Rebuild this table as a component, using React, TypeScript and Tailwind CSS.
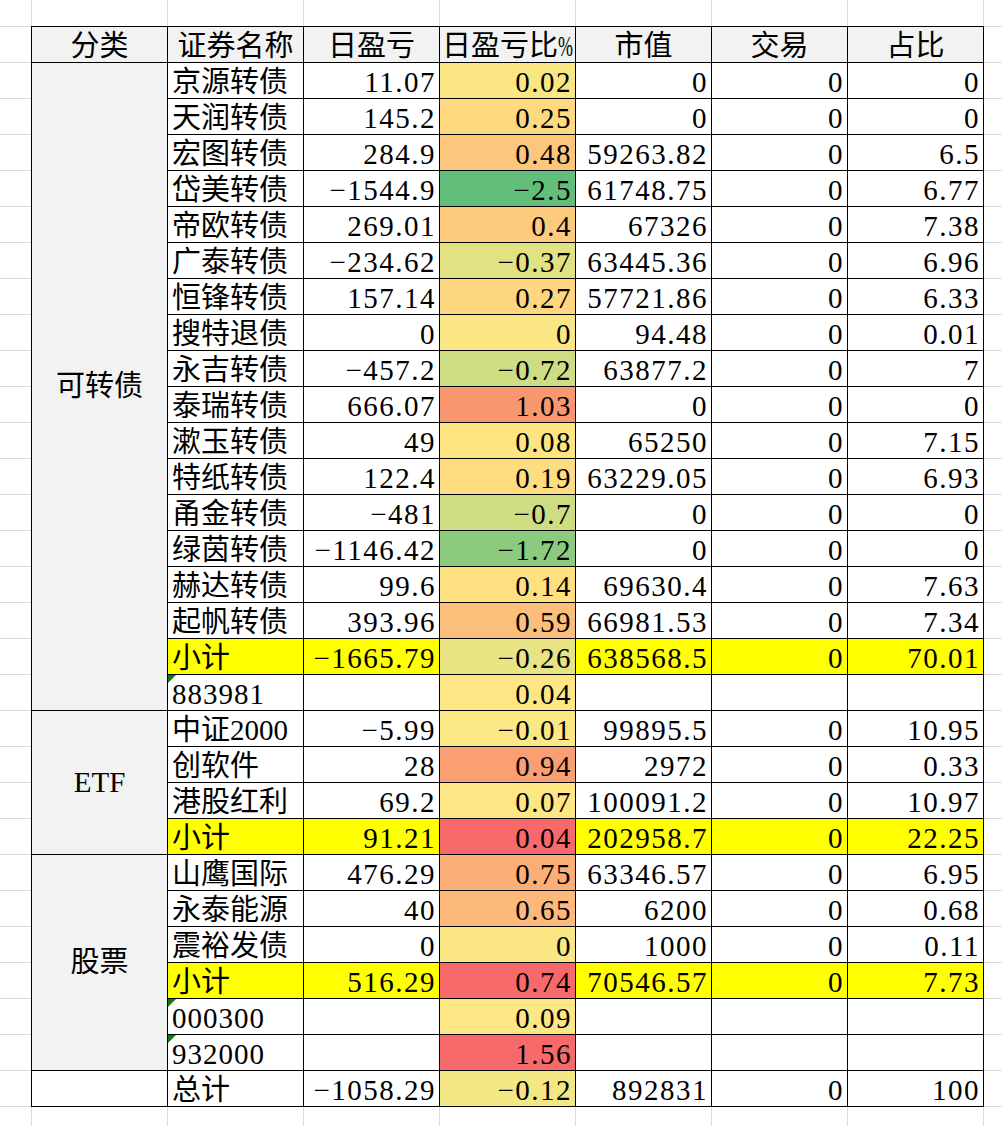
import React from "react";

type Row = {
  name: string;
  pnl?: string;
  pct: string;
  pctBg: string;
  mv?: string;
  trade?: string;
  share?: string;
  sub?: boolean;
  code?: boolean;
};

type Group = {
  cat: string;
  span: string;
  rows: Row[];
};

const groups: Group[] = [
  {
    cat: "可转债",
    span: "row-span-18",
    rows: [
      { name: "京源转债", pnl: "11.07", pct: "0.02", pctBg: "bg-[#fae784]", mv: "0", trade: "0", share: "0" },
      { name: "天润转债", pnl: "145.2", pct: "0.25", pctBg: "bg-[#fed980]", mv: "0", trade: "0", share: "0" },
      { name: "宏图转债", pnl: "284.9", pct: "0.48", pctBg: "bg-[#fdc67d]", mv: "59263.82", trade: "0", share: "6.5" },
      { name: "岱美转债", pnl: "-1544.9", pct: "-2.5", pctBg: "bg-[#63be7b]", mv: "61748.75", trade: "0", share: "6.77" },
      { name: "帝欧转债", pnl: "269.01", pct: "0.4", pctBg: "bg-[#fdcb7e]", mv: "67326", trade: "0", share: "7.38" },
      { name: "广泰转债", pnl: "-234.62", pct: "-0.37", pctBg: "bg-[#e2e283]", mv: "63445.36", trade: "0", share: "6.96" },
      { name: "恒锋转债", pnl: "157.14", pct: "0.27", pctBg: "bg-[#fed680]", mv: "57721.86", trade: "0", share: "6.33" },
      { name: "搜特退债", pnl: "0", pct: "0", pctBg: "bg-[#fae783]", mv: "94.48", trade: "0", share: "0.01" },
      { name: "永吉转债", pnl: "-457.2", pct: "-0.72", pctBg: "bg-[#cedd82]", mv: "63877.2", trade: "0", share: "7" },
      { name: "泰瑞转债", pnl: "666.07", pct: "1.03", pctBg: "bg-[#f99870]", mv: "0", trade: "0", share: "0" },
      { name: "漱玉转债", pnl: "49", pct: "0.08", pctBg: "bg-[#fee582]", mv: "65250", trade: "0", share: "7.15" },
      { name: "特纸转债", pnl: "122.4", pct: "0.19", pctBg: "bg-[#fedd81]", mv: "63229.05", trade: "0", share: "6.93" },
      { name: "甬金转债", pnl: "-481", pct: "-0.7", pctBg: "bg-[#cfdd82]", mv: "0", trade: "0", share: "0" },
      { name: "绿茵转债", pnl: "-1146.42", pct: "-1.72", pctBg: "bg-[#8ccb7e]", mv: "0", trade: "0", share: "0" },
      { name: "赫达转债", pnl: "99.6", pct: "0.14", pctBg: "bg-[#fee081]", mv: "69630.4", trade: "0", share: "7.63" },
      { name: "起帆转债", pnl: "393.96", pct: "0.59", pctBg: "bg-[#fcbf7b]", mv: "66981.53", trade: "0", share: "7.34" },
      { name: "小计", pnl: "-1665.79", pct: "-0.26", pctBg: "bg-[#e8e383]", mv: "638568.5", trade: "0", share: "70.01", sub: true },
      { name: "883981", pct: "0.04", pctBg: "bg-[#fde683]", code: true },
    ],
  },
  {
    cat: "ETF",
    span: "row-span-4",
    rows: [
      { name: "中证2000", pnl: "-5.99", pct: "-0.01", pctBg: "bg-[#f9e883]", mv: "99895.5", trade: "0", share: "10.95" },
      { name: "创软件", pnl: "28", pct: "0.94", pctBg: "bg-[#f99f72]", mv: "2972", trade: "0", share: "0.33" },
      { name: "港股红利", pnl: "69.2", pct: "0.07", pctBg: "bg-[#fde683]", mv: "100091.2", trade: "0", share: "10.97" },
      { name: "小计", pnl: "91.21", pct: "0.04", pctBg: "bg-[#f8696b]", mv: "202958.7", trade: "0", share: "22.25", sub: true },
    ],
  },
  {
    cat: "股票",
    span: "row-span-6",
    rows: [
      { name: "山鹰国际", pnl: "476.29", pct: "0.75", pctBg: "bg-[#fbae76]", mv: "63346.57", trade: "0", share: "6.95" },
      { name: "永泰能源", pnl: "40", pct: "0.65", pctBg: "bg-[#fcb979]", mv: "6200", trade: "0", share: "0.68" },
      { name: "震裕发债", pnl: "0", pct: "0", pctBg: "bg-[#fae783]", mv: "1000", trade: "0", share: "0.11" },
      { name: "小计", pnl: "516.29", pct: "0.74", pctBg: "bg-[#f8696b]", mv: "70546.57", trade: "0", share: "7.73", sub: true },
      { name: "000300", pct: "0.09", pctBg: "bg-[#fde683]", code: true },
      { name: "932000", pct: "1.56", pctBg: "bg-[#f8696b]", code: true },
    ],
  },
  {
    cat: "",
    span: "row-span-1",
    rows: [
      { name: "总计", pnl: "-1058.29", pct: "-0.12", pctBg: "bg-[#f2e783]", mv: "892831", trade: "0", share: "100" },
    ],
  },
];

const headers = ["分类", "证券名称", "日盈亏", "日盈亏比%", "市值", "交易", "占比"];

const fmt = (v?: string) => (v ? v.replace("-", "−") : "");

function TextCell({ value, bg, code }: { value: string; bg: string; code?: boolean }) {
  return (
    <div className={`relative h-[36px] border-r border-b border-black pl-[4px] pt-[3px] leading-[32px] whitespace-nowrap overflow-hidden ${bg}`}>
      {code && (
        <span className="absolute top-0 left-0 w-0 h-0 border-t-[8px] border-t-[#127a12] border-r-[8px] border-r-transparent" />
      )}
      <span className={code ? "tracking-[1px]" : ""}>{value}</span>
    </div>
  );
}

function NumCell({ value, bg }: { value?: string; bg: string }) {
  return (
    <div className={`h-[36px] border-r border-b border-black pr-[3px] pt-[3px] leading-[32px] text-right tracking-[1.5px] whitespace-nowrap overflow-hidden ${bg}`}>
      {fmt(value)}
    </div>
  );
}

function HeaderLabel({ text }: { text: string }) {
  // the percent sign is half width in the sheet's font
  if (text.endsWith("%")) {
    return (
      <>
        {text.slice(0, -1)}
        <span className="inline-block w-[15px] scale-x-[0.62] origin-left">%</span>
      </>
    );
  }
  return <>{text}</>;
}

export default function App() {
  const gutterRows = Array.from({ length: 30 });
  const stripCols = Array.from({ length: 7 });

  return (
    <div className="w-[1002px] h-[1126px] bg-white text-black flex flex-col overflow-hidden font-['Liberation_Serif','Noto_Sans_CJK_SC',serif] text-[29px]">
      {/* top strip of sheet gridlines */}
      <div className="flex h-[26px] shrink-0">
        <div className="w-[32px] border-r border-[#dadada]" />
        {stripCols.map((_, i) => (
          <div key={i} className="w-[136px] border-r border-[#dadada]" />
        ))}
      </div>

      <div className="flex shrink-0">
        {/* left gutter */}
        <div className="w-[31px] border-t border-[#dadada] flex flex-col">
          {gutterRows.map((_, i) => (
            <div key={i} className="h-[36px] border-b border-[#dadada]" />
          ))}
        </div>

        {/* table */}
        <div className="grid grid-cols-[repeat(7,136px)] auto-rows-[36px] border-l border-t border-black">
          {headers.map((h) => (
            <div
              key={h}
              className="h-[36px] border-r border-b border-black bg-[#f2f2f2] pt-[3px] leading-[32px] text-center whitespace-nowrap overflow-hidden"
            >
              <HeaderLabel text={h} />
            </div>
          ))}

          {groups.map((g) => (
            <React.Fragment key={g.cat || "total"}>
              <div
                className={`col-start-1 ${g.span} border-r border-b border-black flex items-center justify-center ${
                  g.cat ? "bg-[#f2f2f2]" : "bg-white"
                }`}
              >
                {g.cat}
              </div>
              {g.rows.map((r, i) => {
                const rowBg = r.sub ? "bg-[#ffff00]" : "bg-white";
                return (
                  <React.Fragment key={i}>
                    <TextCell value={r.name} bg={rowBg} code={r.code} />
                    <NumCell value={r.pnl} bg={rowBg} />
                    <NumCell value={r.pct} bg={r.pctBg} />
                    <NumCell value={r.mv} bg={rowBg} />
                    <NumCell value={r.trade} bg={rowBg} />
                    <NumCell value={r.share} bg={rowBg} />
                  </React.Fragment>
                );
              })}
            </React.Fragment>
          ))}
        </div>

        {/* right gutter */}
        <div className="flex-1 border-t border-[#dadada] flex flex-col">
          {gutterRows.map((_, i) => (
            <div key={i} className="h-[36px] border-b border-[#dadada]" />
          ))}
        </div>
      </div>

      {/* bottom strip of sheet gridlines */}
      <div className="flex flex-1">
        <div className="w-[32px] border-r border-[#dadada]" />
        {stripCols.map((_, i) => (
          <div key={i} className="w-[136px] border-r border-[#dadada]" />
        ))}
      </div>
    </div>
  );
}
